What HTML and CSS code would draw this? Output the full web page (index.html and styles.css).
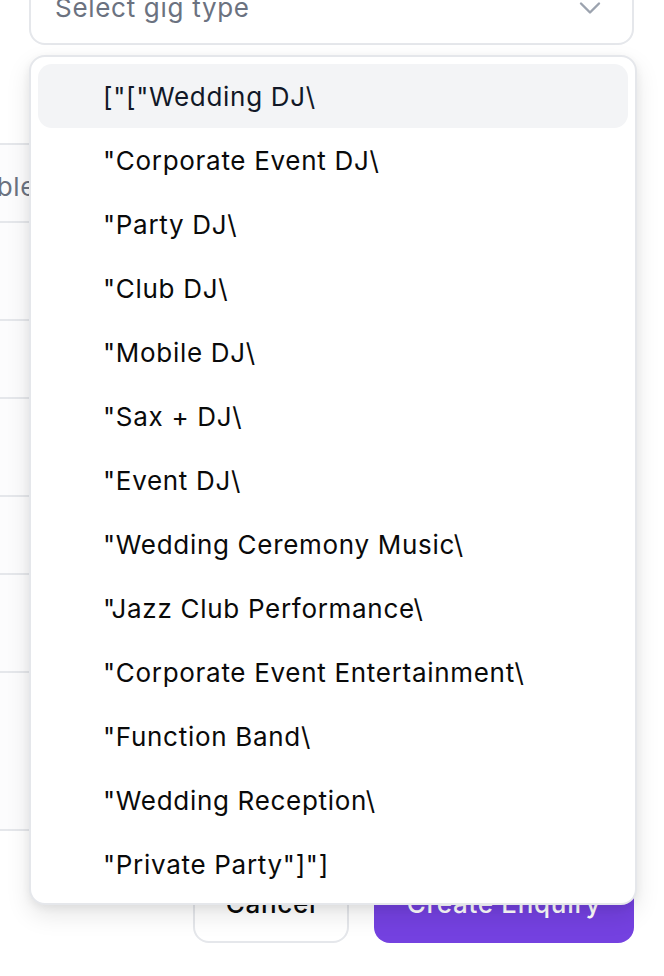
FILE: index.html
```html
<!DOCTYPE html>
<html lang="en">
<head>
<meta charset="utf-8">
<title>Select gig type</title>
<link rel="stylesheet" href="styles.css">
</head>
<body>
<div class="page">
  <div class="form">
    <div class="trigger">
      <span class="placeholder">Select gig type</span>
      <svg class="chev" width="36" height="36" viewBox="0 0 24 24" fill="none" stroke="currentColor" stroke-width="1.6" stroke-linecap="round" stroke-linejoin="round"><path d="m6 9 6 6 6-6"/></svg>
    </div>
    <div class="rows">
      <div class="row r78"><span class="ghost">Available</span></div>
      <div class="row r98"></div>
      <div class="row r78"></div>
      <div class="row r98"></div>
      <div class="row r78"></div>
      <div class="row r98"></div>
      <div class="row r158"></div>
    </div>
    <div class="actions">
      <button class="btn cancel">Cancel</button>
      <button class="btn create">Create Enquiry</button>
    </div>
  </div>

  <div class="menu">
    <div class="item active">["["Wedding DJ\</div>
    <div class="item">"Corporate Event DJ\</div>
    <div class="item">"Party DJ\</div>
    <div class="item">"Club DJ\</div>
    <div class="item">"Mobile DJ\</div>
    <div class="item">"Sax + DJ\</div>
    <div class="item">"Event DJ\</div>
    <div class="item">"Wedding Ceremony Music\</div>
    <div class="item">"Jazz Club Performance\</div>
    <div class="item">"Corporate Event Entertainment\</div>
    <div class="item">"Function Band\</div>
    <div class="item">"Wedding Reception\</div>
    <div class="item">"Private Party"]"]</div>
  </div>
</div>
</body>
</html>
```

FILE: styles.css
```css
html, body {
  margin: 0;
  padding: 0;
  background: #ffffff;
}
body {
  width: 664px;
  height: 976px;
  overflow: hidden;
  font-family: Inter, "Noto Sans", "Liberation Sans", sans-serif;
  font-size: 26px;
  letter-spacing: 0.7px;
  color: #0a0a0a;
}
.page {
  position: relative;
  width: 664px;
  height: 976px;
}
.form {
  display: flex;
  flex-direction: column;
}
.trigger {
  box-sizing: border-box;
  margin: -33px 30px 0 29px;
  height: 78px;
  border: 2px solid #e5e7eb;
  border-radius: 16px;
  display: flex;
  align-items: center;
  justify-content: space-between;
  padding: 0 24px 0 24px;
}
.placeholder {
  color: #6b7280;
  position: relative;
  top: 1px;
}
.chev {
  color: #9ca3af;
  position: relative;
  top: 2px;
}
.rows {
  margin-top: 98px;
  width: 560px;
  border-bottom: 2px solid #e5e7eb;
}
.row {
  box-sizing: border-box;
  border-top: 2px solid #e5e7eb;
  display: flex;
  align-items: center;
  background: #fcfcfd;
}
.r78 { height: 78px; }
.r98 { height: 98px; }
.r158 { height: 158px; }
.ghost {
  color: #6b7280;
  margin-left: -80px;
  white-space: nowrap;
  position: relative;
  top: 3px;
}
.actions {
  display: flex;
  justify-content: flex-end;
  gap: 25px;
  margin: 32px 30px 0 0;
}
.btn {
  box-sizing: border-box;
  height: 80px;
  border-radius: 16px;
  font-family: Inter, "Noto Sans", "Liberation Sans", sans-serif;
  font-size: 26px;
  letter-spacing: 0.7px;
  font-weight: 500;
  padding: 0;
}
.cancel {
  width: 156px;
  background: #ffffff;
  border: 2px solid #e5e7eb;
  color: #0a0a0a;
}
.create {
  width: 260px;
  background: #7441e0;
  border: none;
  color: #ffffff;
}
.menu {
  position: absolute;
  top: 55px;
  left: 29px;
  width: 608px;
  box-sizing: border-box;
  background: #ffffff;
  border: 2px solid #e5e7eb;
  border-radius: 16px;
  padding: 7px 7px;
  box-shadow: 0 10px 24px rgba(0, 0, 0, 0.10), 0 3px 8px rgba(0, 0, 0, 0.06);
}
.item {
  height: 64px;
  display: flex;
  align-items: center;
  padding-left: 65px;
  border-radius: 14px;
  color: #0a0a0a;
  white-space: nowrap;
}
.item.active {
  background: #f3f4f6;
  color: #111827;
}
```
